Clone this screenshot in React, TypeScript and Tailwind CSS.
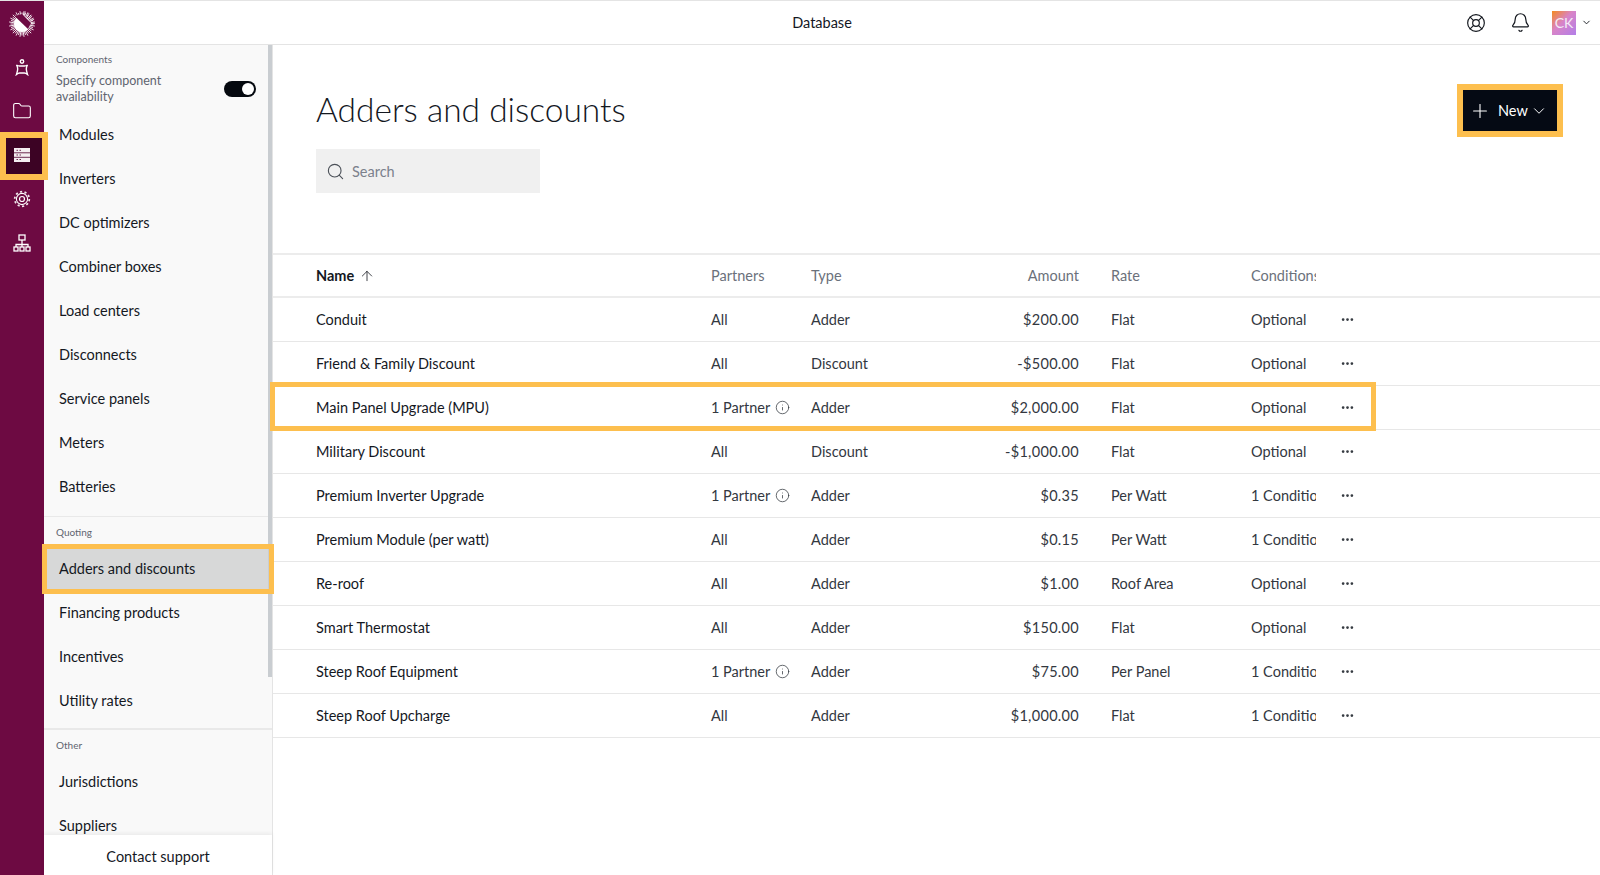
import React from "react";
import { ArrowUp, Bell, ChevronDown, Ellipsis, Folder, Info, LifeBuoy, Plus, Search } from "lucide-react";

const groups = [
  { label: "Components", items: ["Modules", "Inverters", "DC optimizers", "Combiner boxes", "Load centers", "Disconnects", "Service panels", "Meters", "Batteries"] },
  { label: "Quoting", items: ["Adders and discounts", "Financing products", "Incentives", "Utility rates"] },
  { label: "Other", items: ["Jurisdictions", "Suppliers"] },
];

const rows = [
  ["Conduit", "All", "Adder", "$200.00", "Flat", "Optional"],
  ["Friend & Family Discount", "All", "Discount", "-$500.00", "Flat", "Optional"],
  ["Main Panel Upgrade (MPU)", "1 Partner", "Adder", "$2,000.00", "Flat", "Optional"],
  ["Military Discount", "All", "Discount", "-$1,000.00", "Flat", "Optional"],
  ["Premium Inverter Upgrade", "1 Partner", "Adder", "$0.35", "Per Watt", "1 Condition"],
  ["Premium Module (per watt)", "All", "Adder", "$0.15", "Per Watt", "1 Condition"],
  ["Re-roof", "All", "Adder", "$1.00", "Roof Area", "Optional"],
  ["Smart Thermostat", "All", "Adder", "$150.00", "Flat", "Optional"],
  ["Steep Roof Equipment", "1 Partner", "Adder", "$75.00", "Per Panel", "1 Condition"],
  ["Steep Roof Upcharge", "All", "Adder", "$1,000.00", "Flat", "1 Condition"],
];

function Logo() {
  const rays = Array.from({ length: 40 }, (_, i) => {
    const a = (i / 40) * Math.PI * 2;
    return (
      <line
        key={i}
        x1={14 + Math.cos(a) * 5}
        y1={14 + Math.sin(a) * 5}
        x2={14 + Math.cos(a) * (i % 2 ? 13 : 11.5)}
        y2={14 + Math.sin(a) * (i % 2 ? 13 : 11.5)}
        stroke="white"
        strokeWidth="0.9"
      />
    );
  });
  return (
    <svg width="28" height="28" viewBox="0 0 28 28">
      {rays}
      <circle cx="14" cy="14" r="8" fill="white" />
      <path d="M6.500 6 L20 19 L23 13 L14 4 Z" fill="#6d0a42" />
      {Array.from({ length: 5 }, (_, i) => {
        const a = (-75 + i * 18) * (Math.PI / 180);
        return (
          <line key={i} x1={14 + Math.cos(a) * 9} y1={14 + Math.sin(a) * 9} x2={14 + Math.cos(a) * 13} y2={14 + Math.sin(a) * 13} stroke="white" strokeWidth="0.800" />
        );
      })}
    </svg>
  );
}

function PersonIcon() {
  return (
    <svg width="14" height="17" viewBox="0 0 14 17" fill="none" stroke="white" strokeWidth="1.400">
      <circle cx="7" cy="2.500" r="1.700" />
      <path d="M1.500 6c1.500 .9 2.500 1 3 1h5c.5 0 1.500-.1 3-1-.8 1.300-1.200 2.500-1.200 4s.4 2.900 1.200 5.500c-1.500-1.200-2.500-1.500-3-1.500h-5c-.5 0-1.500 .3-3 1.500.8-2.600 1.200-4 1.200-5.500S2.300 7.300 1.500 6Z" />
    </svg>
  );
}

function TableIcon() {
  return (
    <svg width="16" height="14" viewBox="0 0 16 14">
      <rect x="0" y="0" width="16" height="14" fill="#f4eef1" />
      <rect x="0" y="4.300" width="16" height="1" fill="#6d2a50" />
      <rect x="0" y="8.800" width="16" height="1" fill="#6d2a50" />
      {[1.800, 6.500, 11].map((y) => (
        <React.Fragment key={y}>
          <rect x="2.500" y={y} width="1.500" height="1" fill="#6d2a50" />
          <rect x="5.500" y={y} width="1.500" height="1" fill="#6d2a50" />
        </React.Fragment>
      ))}
    </svg>
  );
}

function GearIcon() {
  return (
    <svg width="18" height="18" viewBox="0 0 18 18" fill="none" stroke="white">
      <circle cx="9" cy="9" r="7.300" strokeWidth="1.700" strokeDasharray="2.200 2.390" opacity="0.9" />
      <circle cx="9" cy="9" r="5.600" strokeWidth="1.100" />
      <circle cx="9" cy="9" r="2.500" strokeWidth="1.200" />
    </svg>
  );
}

function OrgIcon() {
  return (
    <svg width="18" height="18" viewBox="0 0 18 18" fill="none" stroke="white" strokeWidth="1.300">
      <rect x="6" y="1" width="6" height="5" />
      <path d="M9 6v4M3 13v-2.500h12V13M9 10v3" />
      <rect x="1" y="13" width="4" height="4" />
      <rect x="7" y="13" width="4" height="4" />
      <rect x="13" y="13" width="4" height="4" />
    </svg>
  );
}

function RailButton({ children, active }: { children: React.ReactNode; active?: boolean }) {
  return (
    <div className={active ? "relative z-10 flex h-[44px] w-[44px] items-center justify-center" : "flex h-[44px] w-[44px] items-center justify-center"}>
      {active && <div className="absolute left-0 top-[-1px] h-[48px] w-[48px] border-[6px] border-[#fdbf4e] bg-[#3c0324]" />}
      <div className="relative flex items-center justify-center">{children}</div>
    </div>
  );
}

export default function App() {
  return (
    <div
      className="flex h-[875px] w-[1600px] overflow-hidden border-t border-[#e4e4e4] bg-white text-[14.500px] text-[#14181f]"
      style={{ fontFamily: "Lato, 'Liberation Sans', sans-serif" }}
    >
      <nav className="flex w-[44px] shrink-0 flex-col bg-[#6d0a42] pt-px">
        <div className="flex h-[43px] items-center justify-center"><Logo /></div>
        <RailButton><PersonIcon /></RailButton>
        <RailButton><Folder size={20} color="white" strokeWidth={1.300} /></RailButton>
        <RailButton active><TableIcon /></RailButton>
        <RailButton><GearIcon /></RailButton>
        <RailButton><OrgIcon /></RailButton>
      </nav>

      <div className="flex min-w-0 flex-1 flex-col">
        <header className="relative flex h-[44px] shrink-0 items-center justify-center border-b border-[#e4e4e4]">
          <span>Database</span>
          <div className="absolute right-[8px] top-0 flex h-[43px] items-center">
            <LifeBuoy size={20} strokeWidth={1.400} className="mr-[24px]" />
            <Bell size={21} strokeWidth={1.400} className="mr-[21px]" />
            <div className="flex h-[24px] w-[24px] items-center justify-center bg-[linear-gradient(135deg,#f58a1f_0%,#d884c8_45%,#b27ee8_100%)] text-[14px] text-[#f4ecf6]">CK</div>
            <ChevronDown size={11} strokeWidth={2} className="ml-[5px]" />
          </div>
        </header>

        <div className="flex min-h-0 flex-1">
          <aside className="relative flex w-[229px] shrink-0 flex-col border-r border-[#e4e4e4] bg-[#f9f9f9]">
            <div className="absolute right-0 top-0 h-[632px] w-[4px] bg-[#c9cdd1]" />
            <div className="min-h-0 flex-1 overflow-y-clip">
              {groups.map((g, gi) => (
                <section key={g.label} className={gi === 0 ? "border-b border-[#e9e9e9] pb-[7px] pr-[4px]" : gi === 1 ? "border-b-2 border-[#e9e9e9] pb-[5px] pr-[4px]" : "pr-[4px]"}>
                  <div className={gi === 0 ? "px-[12px] pt-[8px] text-[10px] leading-[12px] text-[#5f6570]" : "px-[12px] pt-[9px] text-[10px] leading-[12px] text-[#5f6570]"}>{g.label}</div>
                  {gi === 0 && (
                    <div className="flex items-center justify-between pl-[12px] pr-[12px] pt-[8px]">
                      <div className="w-[130px] text-[12.500px] leading-[15.500px] text-[#5f6570]">Specify component availability</div>
                      <div className="flex h-[16px] w-[32px] items-center justify-end rounded-full bg-[#05090f] pr-[2px]">
                        <div className="h-[12px] w-[12px] rounded-full bg-white" />
                      </div>
                    </div>
                  )}
                  <div className="pt-[9px]">
                    {g.items.map((it) => {
                      const active = it === "Adders and discounts";
                      return (
                        <div key={it} className={active ? "relative flex h-[44px] items-center bg-[#d7d8d8] pl-[15px]" : "flex h-[44px] items-center pl-[15px]"}>
                          {active && <div className="absolute -bottom-[3px] -left-[2px] -right-[6px] -top-[3px] z-10 border-[5px] border-[#fdbf4e]" />}
                          {it}
                        </div>
                      );
                    })}
                  </div>
                </section>
              ))}
            </div>
            <div className="relative flex h-[40px] shrink-0 items-center justify-center bg-white pt-[3px] shadow-[0_-2px_4px_rgba(0,0,0,0.06)]">Contact support</div>
          </aside>

          <main className="min-w-0 flex-1">
            <div className="flex h-[210px] items-start justify-between border-b-2 border-[#ececec] pl-[43px] pr-[37px]">
              <div>
                <h1 className="pt-[42px] text-[33.500px] font-light leading-[44px]">Adders and discounts</h1>
                <div className="mt-[18px] flex h-[44px] w-[224px] items-center gap-[7px] bg-[#f0f0f0] pl-[10px] text-[#7b818c]">
                  <Search size={19} strokeWidth={1.400} className="text-[#4b5058]" />
                  <span className="pt-px">Search</span>
                </div>
              </div>
              <div className="mt-[39px] border-[6px] border-[#fdbf4e]">
                <div className="flex h-[41px] w-[94px] items-center bg-[#050a14] pl-[6px] text-white">
                  <Plus size={22} strokeWidth={1.200} />
                  <span className="ml-[7px]">New</span>
                  <ChevronDown size={18} strokeWidth={1.300} className="ml-[2px]" />
                </div>
              </div>
            </div>

            <div className="flex h-[43px] items-center border-b-2 border-[#ececec] pl-[43px] text-[#6b717b]">
              <div className="flex w-[395px] items-center font-bold text-[#14181f]">Name<ArrowUp size={16} strokeWidth={1.200} className="ml-[5px]" /></div>
              <div className="w-[100px]">Partners</div>
              <div className="w-[100px]">Type</div>
              <div className="w-[168px] text-right">Amount</div>
              <div className="w-[172px] pl-[32px]">Rate</div>
              <div className="w-[65px] overflow-hidden whitespace-nowrap">Conditions</div>
            </div>

            {rows.map((r, i) => (
              <div key={r[0]} className="relative flex h-[44px] items-center border-b border-[#e7e7e7] pl-[43px] text-[#33383f]">
                {i === 2 && <div className="absolute -top-[4px] left-[-3px] z-10 h-[49px] w-[1106px] border-[5px] border-[#fdbf4e]" />}
                <div className="w-[395px] text-[#14181f]">{r[0]}</div>
                <div className="flex w-[100px] items-center">
                  {r[1]}
                  {r[1] !== "All" && <Info size={15} strokeWidth={1.200} className="ml-[5px]" />}
                </div>
                <div className="w-[100px]">{r[2]}</div>
                <div className="w-[168px] text-right tracking-[0.3px]">{r[3]}</div>
                <div className="w-[172px] pl-[32px]">{r[4]}</div>
                <div className="w-[65px] overflow-hidden whitespace-nowrap">{r[5]}</div>
                <Ellipsis size={15} strokeWidth={2.400} className="ml-[24px]" />
              </div>
            ))}
          </main>
        </div>
      </div>
    </div>
  );
}
